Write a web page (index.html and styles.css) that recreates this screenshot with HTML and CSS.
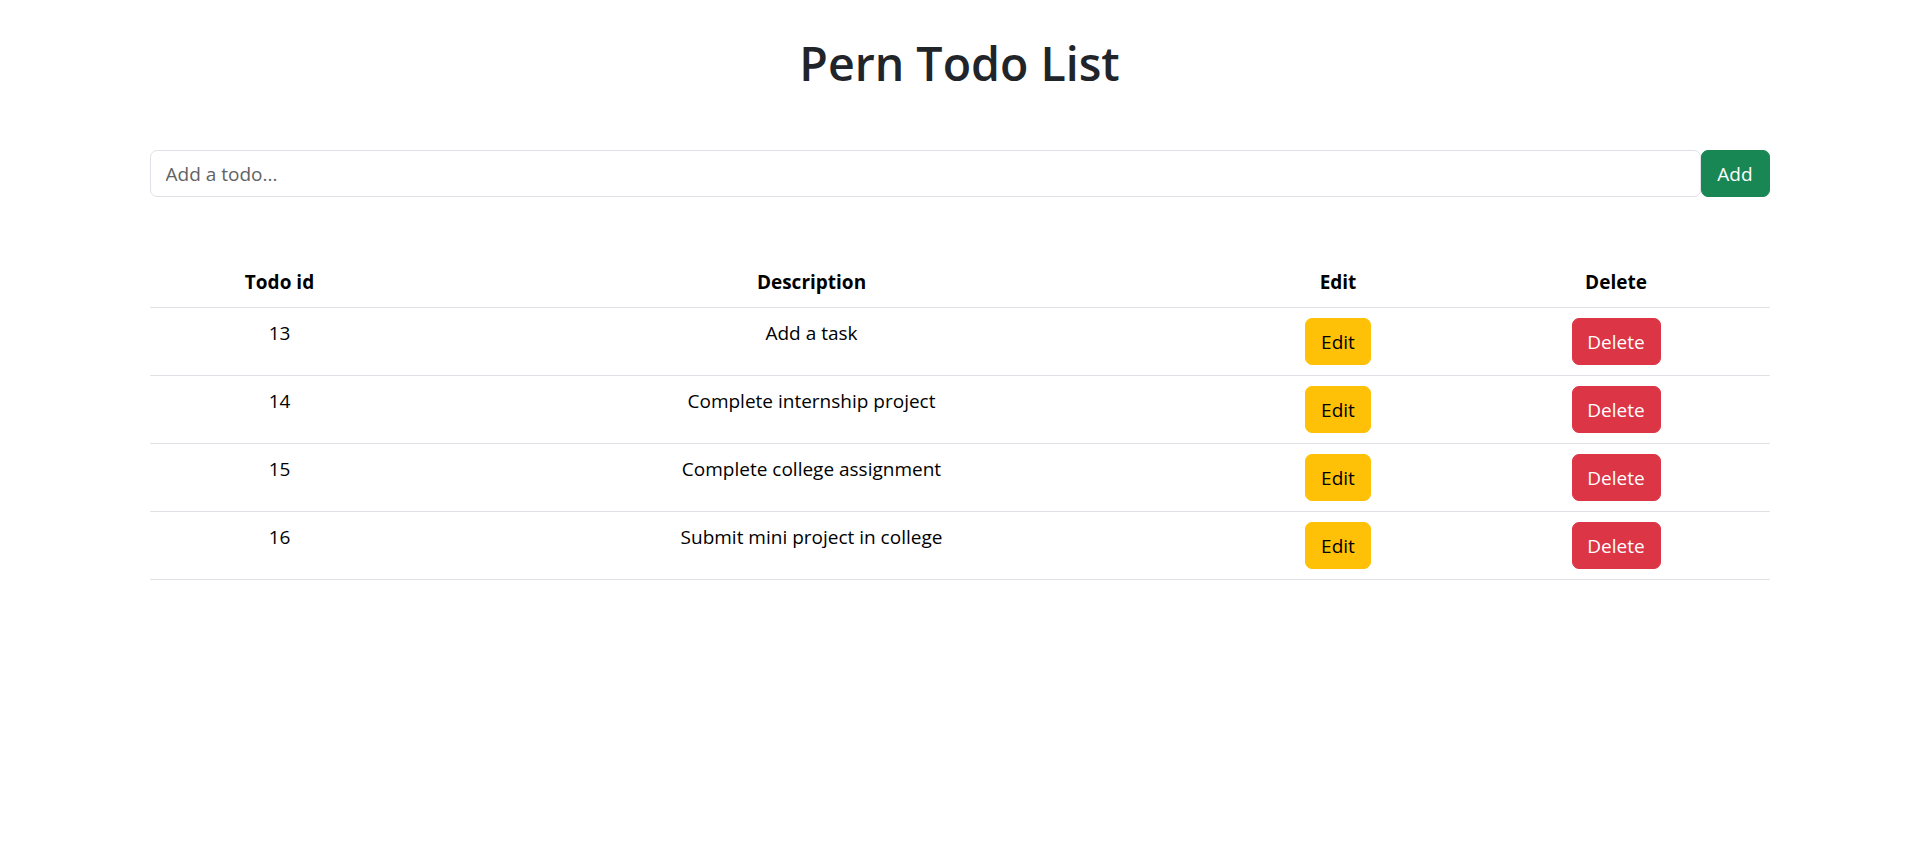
FILE: index.html
```html
<!DOCTYPE html>
<html lang="en">
<head>
<meta charset="utf-8">
<title>Pern Todo List</title>
<link rel="stylesheet" href="styles.css">
</head>
<body>
<div class="container">
  <h1 class="title">Pern Todo List</h1>
  <form class="todo-form">
    <input class="todo-input" type="text" placeholder="Add a todo...">
    <button class="btn btn-success" type="button">Add</button>
  </form>
  <table class="todo-table">
    <colgroup>
      <col class="c-id"><col class="c-desc"><col class="c-edit"><col class="c-del">
    </colgroup>
    <thead>
      <tr><th>Todo id</th><th>Description</th><th>Edit</th><th>Delete</th></tr>
    </thead>
    <tbody>
      <tr><td>13</td><td>Add a task</td><td><button class="btn btn-warning" type="button">Edit</button></td><td><button class="btn btn-danger" type="button">Delete</button></td></tr>
      <tr><td>14</td><td>Complete internship project</td><td><button class="btn btn-warning" type="button">Edit</button></td><td><button class="btn btn-danger" type="button">Delete</button></td></tr>
      <tr><td>15</td><td>Complete college assignment</td><td><button class="btn btn-warning" type="button">Edit</button></td><td><button class="btn btn-danger" type="button">Delete</button></td></tr>
      <tr><td>16</td><td>Submit mini project in college</td><td><button class="btn btn-warning" type="button">Edit</button></td><td><button class="btn btn-danger" type="button">Delete</button></td></tr>
    </tbody>
  </table>
</div>
</body>
</html>
```
FILE: styles.css
```css
* { box-sizing: border-box; }
html, body { margin: 0; padding: 0; background: #fff; }
body {
  font-family: "Open Sans", "Noto Sans", sans-serif;
  font-size: 19px;
  line-height: 30px;
  color: #212529;
}
.container {
  width: 1620px;
  margin: 0 auto;
}
.title {
  margin: 0;
  padding-top: 35px;
  font-size: 46.5px;
  line-height: 57px;
  font-weight: 600;
  text-align: center;
  color: #212529;
}
.todo-form {
  display: flex;
  margin-top: 58px;
}
.todo-input {
  flex: 1;
  height: 47px;
  padding: 7px 15px;
  font-family: inherit;
  font-size: 19px;
  color: #212529;
  border: 1px solid #dee2e6;
  border-radius: 7px;
  outline: none;
}
.todo-input::placeholder { color: #5f6366; }
.btn {
  display: inline-block;
  height: 47px;
  padding: 7px 15px;
  font-family: inherit;
  font-size: 19px;
  line-height: 30px;
  border: 1px solid transparent;
  border-radius: 7px;
  cursor: pointer;
}
.btn-success { background: #198754; border-color: #198754; color: #fff; width: 69px; padding: 7px 0; }
.btn-warning { background: #ffc107; border-color: #ffc107; color: #000; width: 66px; padding: 7px 0; }
.btn-danger { background: #dc3545; border-color: #dc3545; color: #fff; width: 89px; padding: 7px 0; }
.todo-table {
  width: 100%;
  margin-top: 60px;
  border-collapse: collapse;
  table-layout: fixed;
  color: #000;
}
.c-id { width: 260px; }
.c-desc { width: 804px; }
.c-edit { width: 249px; }
.c-del { width: 307px; }
.todo-table th,
.todo-table td {
  padding: 10px;
  text-align: center;
  vertical-align: top;
  border-bottom: 1px solid #dee2e6;
}
.todo-table th { font-weight: 700; }
```
